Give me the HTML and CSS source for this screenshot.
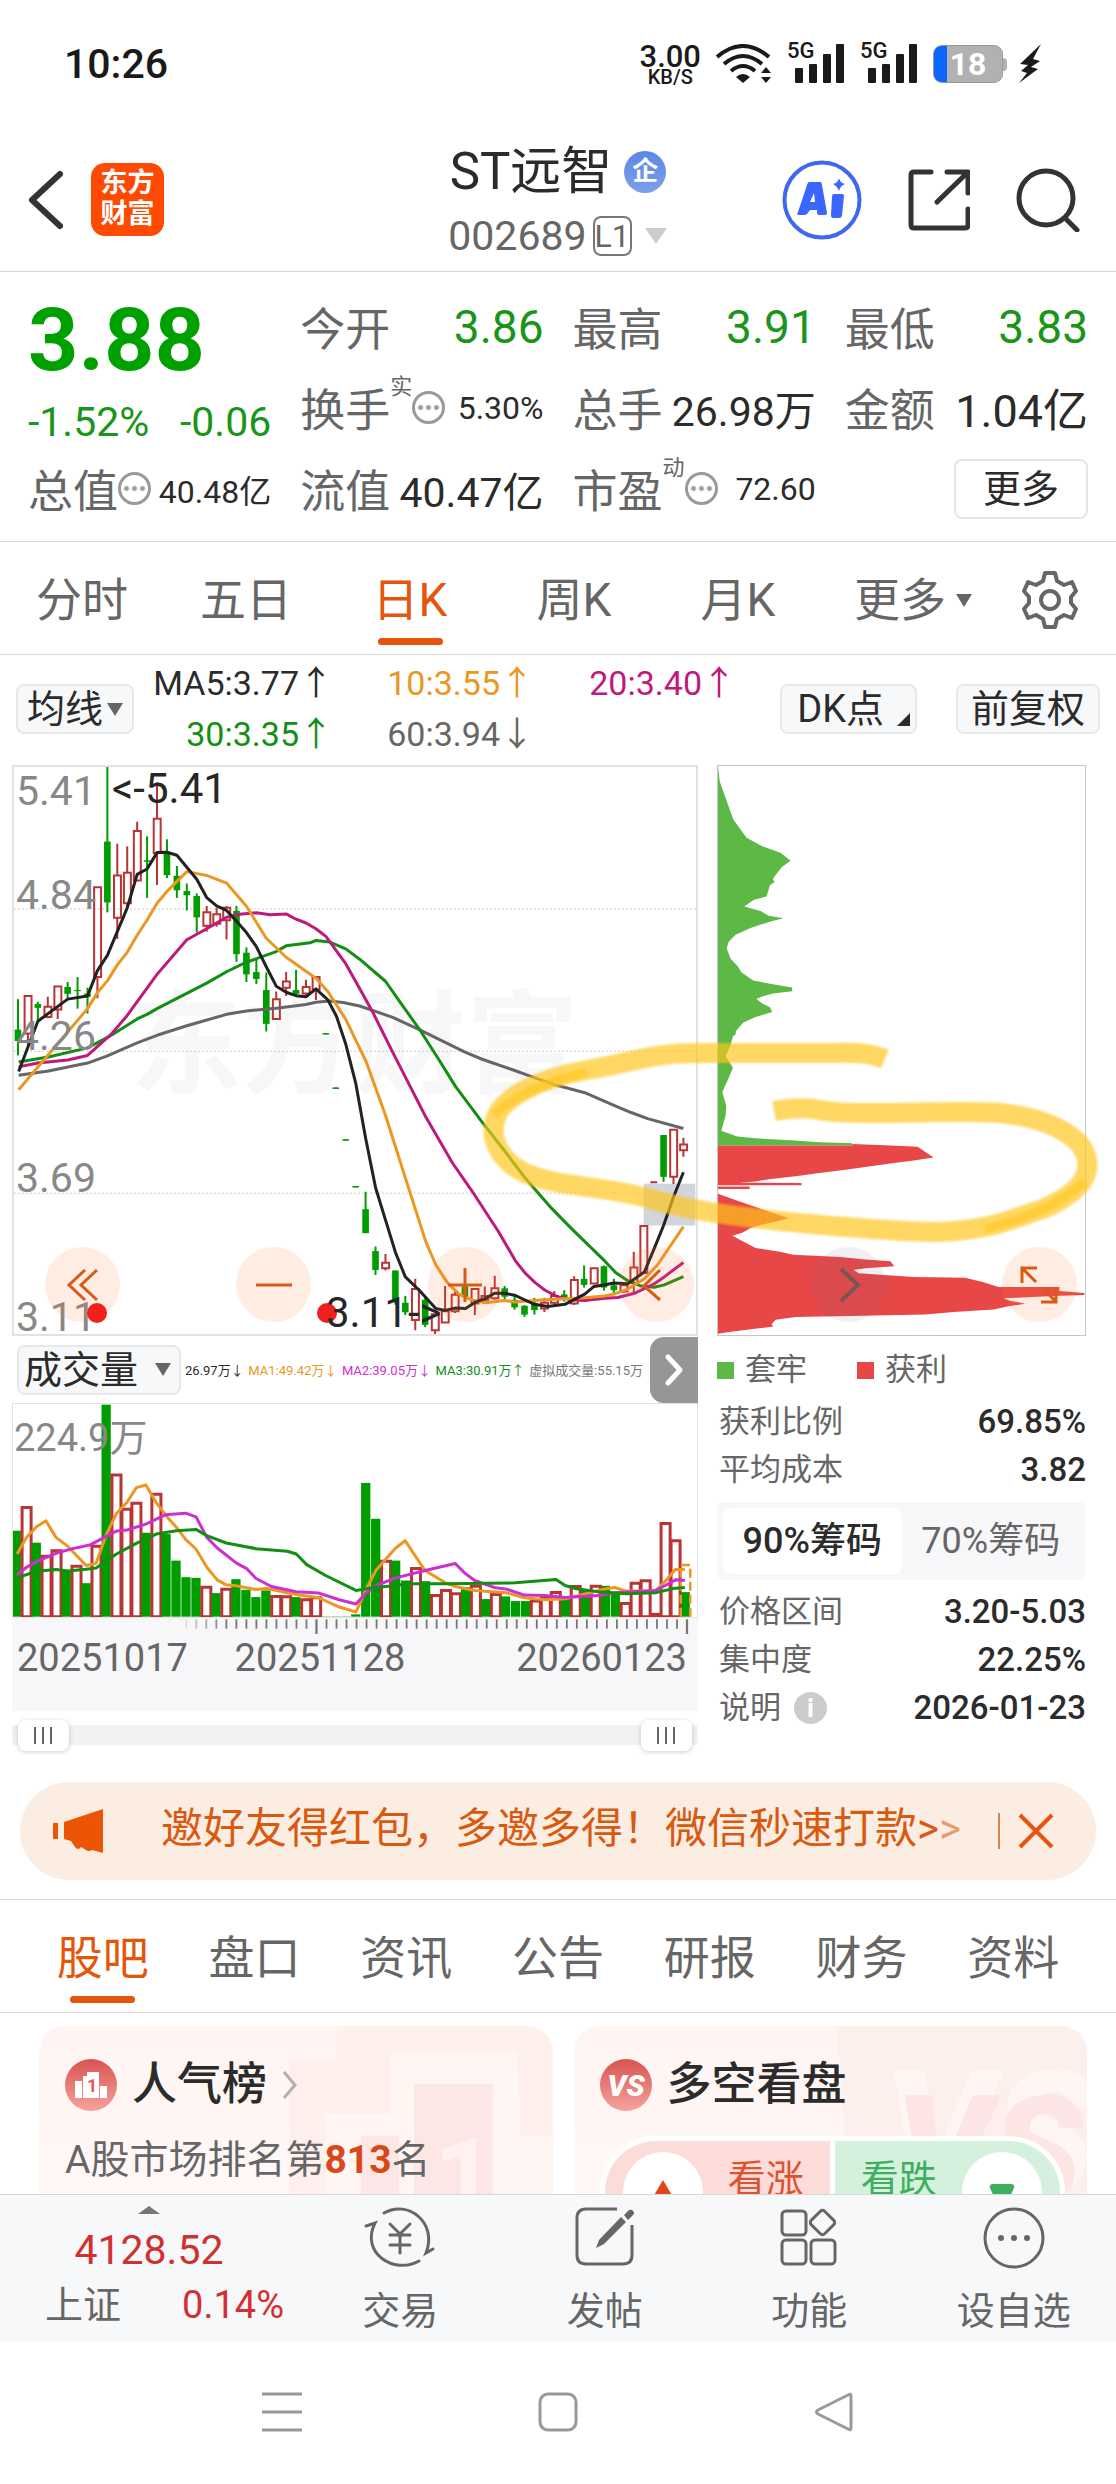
FILE: index.html
```html
<!DOCTYPE html>
<html lang="zh-CN">
<head>
<meta charset="utf-8">
<meta name="viewport" content="width=device-width, initial-scale=1">
<title>ST远智 002689</title>
<link rel="stylesheet" href="styles.css">
</head>
<body>
<div class="status">
  <span class="status-time">10:26</span>
  <div class="status-right">
    <span class="speed"><b>3.00</b><span>KB/S</span></span>
    <svg width="56" height="40" viewBox="0 0 56 40" fill="none" stroke="#1a1a1a" stroke-width="4"><path d="M1 13Q27-9 53 13M8 20Q27 4 46 20M15 27Q27 17 39 27"/><path d="M27 39l-7-6q7-6 14 0zM50 23l5 6H45zM50 39l5-6H45z" fill="#1a1a1a" stroke="none"/></svg>
    <span class="signal"><span>5G</span><svg width="50" height="40" viewBox="0 0 50 40" fill="#1a1a1a"><rect y="24" width="8" height="15" rx="1"/><rect x="14" y="20" width="8" height="19" rx="1"/><rect x="28" y="10" width="8" height="29" rx="1"/><rect x="41" width="8" height="39" rx="1"/></svg></span>
    <span class="signal"><span>5G</span><svg width="50" height="40" viewBox="0 0 50 40" fill="#1a1a1a"><rect y="24" width="8" height="15" rx="1"/><rect x="14" y="20" width="8" height="19" rx="1"/><rect x="28" y="10" width="8" height="29" rx="1"/><rect x="41" width="8" height="39" rx="1"/></svg></span>
    <span class="battery">18</span>
    <svg width="22" height="40" viewBox="0 0 22 40" fill="#1a1a1a"><path d="M22 0L1 20l8 1-7 6 6 2L0 39l19-14-7-2 9-6-7-2z"/></svg>
  </div>
</div>

<header class="header">
  <div class="header-left">
    <button class="plain" aria-label="返回"><svg width="36" height="60" viewBox="0 0 36 60" fill="none" stroke="#333" stroke-width="6" stroke-linecap="round" stroke-linejoin="round"><path d="M32 4L4 30l28 26"/></svg></button>
    <a class="logo" href="#">东方<br>财富</a>
  </div>
  <div class="title">
    <h1>ST远智<span class="badge">企</span></h1>
    <div class="code">002689<span class="level">L1</span><svg width="24" height="16" viewBox="0 0 24 16"><path d="M1 0h22L12 16z" fill="#ccc"/></svg></div>
  </div>
  <div class="header-right">
    <button class="plain" aria-label="AI"><svg width="80" height="80" viewBox="0 0 80 80"><circle cx="40" cy="40" r="37.500" fill="none" stroke="#4068ec" stroke-width="4"/><path fill="#3b66ff" fill-rule="evenodd" d="M27 22h11q2 0 2 3l5 28q0 2-2 2h-6q-2 0-2-2v-3h-7l-3 4q-1 1-3 1h-5q-3 0-1-3l9-27q1-3 2-3zM32 33l-4 9h5zM52 34h8q2 0 2 2l-2 19q0 3-3 3h-6q-2 0-2-3l1-18q0-3 2-3zM57 18q1 5 6 6-5 2-6 7-2-5-6-7 5-1 6-6z"/></svg></button>
    <button class="plain" aria-label="分享"><svg width="62" height="62" viewBox="0 0 62 62" fill="none" stroke="#333" stroke-width="5" stroke-linecap="round" stroke-linejoin="round"><path d="M23 3H6Q3 3 3 6v50q0 3 3 3h51q3 0 3-3V40M39 3h21v21M59 4L29 33"/></svg></button>
    <button class="plain" aria-label="搜索"><svg width="64" height="64" viewBox="0 0 64 64" fill="none" stroke="#333" stroke-width="5" stroke-linecap="round"><circle cx="30" cy="30" r="27"/><path d="M50 51l11 11"/></svg></button>
  </div>
</header>

<main class="content">
<section class="quote">
  <div class="price-block">
    <strong class="price">3.88</strong>
    <div class="change"><span>-1.52%</span><span>-0.06</span></div>
  </div>
  <div class="cell"><span class="label">今开</span><span class="num down">3.86</span></div>
  <div class="cell"><span class="label">最高</span><span class="num down">3.91</span></div>
  <div class="cell"><span class="label">最低</span><span class="num down">3.83</span></div>
  <div class="cell"><span class="label">换手<sup>实</sup><i class="dots"></i></span><span class="num small">5.30%</span></div>
  <div class="cell"><span class="label">总手</span><span class="num mid">26.98万</span></div>
  <div class="cell"><span class="label">金额</span><span class="num large">1.04亿</span></div>
  <div class="cell"><span class="label">总值<i class="dots"></i></span><span class="num small">40.48亿</span></div>
  <div class="cell"><span class="label">流值</span><span class="num mid">40.47亿</span></div>
  <div class="cell"><span class="label">市盈<sup>动</sup><i class="dots"></i></span><span class="num small">72.60</span></div>
  <div class="cell end"><button class="more">更多</button></div>
</section>

<nav class="tabs periods">
  <a href="#">分时</a><a href="#">五日</a><a href="#" class="on">日K</a><a href="#">周K</a><a href="#">月K</a><a href="#" class="more-tab">更多<i class="tri"></i></a>
  <button class="plain gear" aria-label="设置"><svg width="56" height="60" viewBox="0 0 56 60" fill="none" stroke="#666" stroke-width="4" stroke-linejoin="round"><path d="M23 3h10l2 8 7 4 8-3 4 9-5 6v6l5 6-4 9-8-3-7 4-2 8H23l-2-8-7-4-8 3-4-9 5-6v-6l-5-6 4-9 8 3 7-4z"/><circle cx="28" cy="30" r="9"/></svg></button>
</nav>

<section class="indicators">
  <button class="chip">均线<i class="tri"></i></button>
  <div class="ma">
    <span class="c-ma5">MA5:3.77↑</span><span class="c-ma10">10:3.55↑</span><span class="c-ma20">20:3.40↑</span>
    <span class="c-ma30">30:3.35↑</span><span class="c-ma60">60:3.94↓</span>
  </div>
  <button class="chip dk">DK点<i class="corner"></i></button>
  <button class="chip adjust">前复权</button>
</section>

<section class="charts">
  <div class="chart-row">
    <div class="price-chart">
      <span class="watermark">东方财富</span>
      <svg class="plot" id="price" viewBox="36 10 2060 1490" preserveAspectRatio="none"></svg>
      <span class="axis-label y1">5.41</span>
      <span class="axis-label y2">4.84</span>
      <span class="axis-label y3">4.26</span>
      <span class="axis-label y4">3.69</span>
      <span class="axis-label y5">3.11</span>
      <span class="extreme high">&lt;-5.41</span>
    </div>
    <div class="chip-chart">
      <svg class="plot" viewBox="52 10 1103 1490" preserveAspectRatio="none">
        <path fill="#5cb946" d="M52 10L57 50 98 150 138 198 185 220 240 237 270 258 243 275 217 305 222 314 208 322 198 352 160 360 131 378 180 390 205 402 249 409 218 415 150 434 105 452 84 470 78 488 90 515 112 535 122 550 138 560 158 572 208 580 275 590V600L217 606 187 613 168 620 185 632 208 642 215 654 165 667 128 682 105 705 106 712 97 718 90 740 75 770 97 800 80 835 72 850 65 865 77 900 75 925 62 965 110 980 165 985 270 990 358 995 456 998V1004H52z"/>
        <path fill="#e84747" d="M52 1004H456V1000L553 1003 652 1007 700 1035 640 1043 575 1050 435 1067 345 1077 297 1083 205 1092 165 1098 115 1101 303 1102V1108H52zM52 1111H147V1118H52zM52 1130L115 1150 165 1165 215 1180 265 1194 215 1205 180 1212 150 1220 125 1232 95 1240 165 1272 238 1282 278 1290 420 1296 495 1302 570 1307 582 1320 495 1325 460 1330 475 1338 640 1348 795 1350 850 1362 895 1374H1078V1385L1153 1390V1395L1080 1397 910 1404 930 1410 975 1418 925 1425 880 1433 760 1440 675 1446 450 1450 285 1453 225 1460 213 1472 218 1478 168 1483 80 1493 52 1497z"/>
      </svg>
    </div>
    <div class="chart-tools">
      <button class="round" aria-label="左移"><svg width="34" height="34" viewBox="0 0 34 34"><path d="M19 2L3 17l16 15M31 2L15 17l16 15"/></svg></button>
      <button class="round" aria-label="缩小"><svg width="38" height="34" viewBox="0 0 38 34"><path d="M1 17h36"/></svg></button>
      <button class="round" aria-label="放大"><svg width="36" height="34" viewBox="0 0 36 34"><path d="M1 17h34M18 0v34"/></svg></button>
      <button class="round" aria-label="收起"><svg width="34" height="34" viewBox="0 0 34 34"><path d="M20 2L4 18l16 14"/></svg></button>
      <button class="round gray" aria-label="展开"><svg width="34" height="34" viewBox="0 0 34 34"><path d="M10 1l17 16L10 33"/></svg></button>
      <button class="round" aria-label="全屏"><svg width="38" height="38" viewBox="0 0 38 38"><path d="M17 2H2v15M2 2l14 14M21 36h15V22M36 36L23 22"/></svg></button>
    </div>
    <i class="dot dot-a"></i><i class="dot dot-b"></i>
    <span class="extreme low">3.11-&gt;</span>
    <svg class="marker" viewBox="12 764 1074 571" preserveAspectRatio="none" fill="none" stroke="#ffc61e" stroke-width="20">
      <defs><filter id="soft" x="-5%" y="-15%" width="110%" height="130%"><feGaussianBlur stdDeviation="1"/></filter></defs>
      <g filter="url(#soft)" opacity=".68">
        <path d="M885 1058C865 1050 850 1052 820 1052H700C650 1052 640 1060 587 1069S507 1098 499 1110C485 1135 500 1160 525 1172C560 1187 600 1184 647 1197S720 1213 753 1217S890 1231 940 1231C1000 1228 1015 1216 1043 1208C1075 1194 1090 1178 1087 1160C1084 1132 1040 1116 1000 1112S850 1116 820 1109Q800 1105 774 1110"/>
      </g>
      <g filter="url(#soft)" opacity=".6" stroke-width="9"><path d="M494 1114C510 1098 540 1082 587 1071M985 1228C1025 1218 1060 1204 1085 1180"/></g>
    </svg>
  </div>

  <div class="chart-row lower">
    <div class="left">
      <div class="vol-bar">
        <button class="chip vol-name">成交量<i class="tri"></i></button>
        <div class="vol-legend"><span>26.97万↓</span><span class="c-ma10">MA1:49.42万↓</span><span class="c-vm2">MA2:39.05万↓</span><span class="c-ma30">MA3:30.91万↑</span><span class="c-gray">虚拟成交量:55.15万</span></div>
        <button class="next" aria-label="下一个"><svg width="20" height="32" viewBox="0 0 20 32" fill="none" stroke="#fff" stroke-width="5" stroke-linecap="round" stroke-linejoin="round"><path d="M4 3l12 13L4 29"/></svg></button>
      </div>
      <div class="vol-chart">
        <svg class="plot" id="volume" viewBox="28 188 1514 642" preserveAspectRatio="none"></svg>
        <span class="vol-max">224.9万</span>
      </div>
      <div class="axis">
        <svg id="ticks" viewBox="28 0 1514 48" preserveAspectRatio="none"></svg>
        <div class="dates"><span>20251017</span><span>20251128</span><span>20260123</span></div>
      </div>
      <div class="range">
        <input type="range" aria-label="起始日期" value="0"><input type="range" aria-label="结束日期" value="100">
      </div>
    </div>
    <div class="stats">
      <div class="legend"><span class="k green">套牢</span><span class="k red">获利</span></div>
      <dl><div><dt>获利比例</dt><dd>69.85%</dd></div><div><dt>平均成本</dt><dd>3.82</dd></div></dl>
      <div class="seg"><button class="on">90%筹码</button><button>70%筹码</button></div>
      <dl><div><dt>价格区间</dt><dd>3.20-5.03</dd></div><div><dt>集中度</dt><dd>22.25%</dd></div><div><dt>说明<i class="info">i</i></dt><dd>2026-01-23</dd></div></dl>
    </div>
  </div>
</section>

<div class="banner">
  <svg width="52" height="44" viewBox="0 0 52 44" fill="#eb5505"><path d="M0 14h5v16H0zM11 13L50 0v44l-11-3q-3 2-6 0l-5-3q-3 4-6 0l-4-6-7-2z"/></svg>
  <a href="#">邀好友得红包，多邀多得！微信秒速打款&gt;<span>&gt;</span></a>
  <button class="plain close" aria-label="关闭"><svg width="36" height="36" viewBox="0 0 36 36" fill="none" stroke="#e5550f" stroke-width="4"><path d="M2 2l32 32M34 2L2 34"/></svg></button>
</div>

<nav class="tabs sections">
  <a href="#" class="on">股吧</a><a href="#">盘口</a><a href="#">资讯</a><a href="#">公告</a><a href="#">研报</a><a href="#">财务</a><a href="#">资料</a>
</nav>

<section class="cards">
  <article class="card">
    <svg class="card-art" width="514" height="170" viewBox="0 0 514 170"><path fill="#fff0ed" d="M250 35h48V0h216v170H250z"/><path fill="#fff6f4" d="M286 88h66V26h126l4 84h32v60H286z"/><path fill="#fde7e4" d="M375 58h79v112h-79zM322 110h38v60h-38z"/><text x="394" y="190" font-size="110" font-weight="700" fill="#fff1ee">1</text></svg>
    <h2><svg width="52" height="52" viewBox="0 0 52 52"><defs><linearGradient id="rg" x2="0" y2="1"><stop stop-color="#d85450"/><stop offset="1" stop-color="#f5a29d"/></linearGradient></defs><circle cx="26" cy="26" r="26" fill="url(#rg)"/><path fill="#fff" d="M10 22h7v17h-7zM35 27h7v12h-7zM18 39h16V13H22v4h-4z"/><text x="22" y="33" font-size="18" font-weight="700" fill="#d8605c">1</text></svg>人气榜<svg width="16" height="30" viewBox="0 0 16 30" fill="none" stroke="#b5b0b0" stroke-width="3"><path d="M2 2l11 13L2 28"/></svg></h2>
    <p>A股市场排名第<b>813</b>名</p>
  </article>
  <article class="card">
    <svg class="card-art" width="514" height="170" viewBox="0 0 514 170"><path fill="#fdefec" d="M264 0h250v170H276z"/><text x="310" y="166" font-size="170" font-weight="900" font-style="italic" fill="#fff6f3">VS</text><text x="322" y="176" font-size="150" font-weight="900" font-style="italic" fill="#fce5e2">VS</text></svg>
    <h2><svg width="52" height="52" viewBox="0 0 52 52"><circle cx="26" cy="26" r="26" fill="url(#rg)"/><text x="26" y="37" font-size="30" font-weight="900" font-style="italic" text-anchor="middle" fill="#fff">VS</text></svg>多空看盘</h2>
    <div class="vote">
      <button class="bull"><svg width="80" height="80" viewBox="0 0 80 80"><circle cx="40" cy="40" r="40" fill="#fff"/><path d="M40 28l20 34H20z" fill="#e0461a"/></svg>看涨</button>
      <button class="bear">看跌<svg width="80" height="80" viewBox="0 0 80 80"><circle cx="40" cy="40" r="40" fill="#fff"/><path d="M31 32h18q4 0 3 4L40 62 28 36q-1-4 3-4z" fill="#3db060"/></svg></button>
    </div>
  </article>
</section>
</main>

<footer class="bottom-bar">
  <a class="index" href="#"><i class="up-tri"></i><span class="index-value">4128.52</span><span class="index-row"><span>上证</span><span class="up">0.14%</span></span></a>
  <a href="#"><svg width="72" height="66" viewBox="0 0 72 66" fill="none" stroke="#666" stroke-width="3" stroke-linecap="round"><path d="M20 8C44-6 74 18 62 48l7-4M55 56C30 70-4 48 11 18l-9 3M26 19l10 10 10-10M36 29v19M26 30h20M26 40h20"/></svg>交易</a>
  <a href="#"><svg width="60" height="66" viewBox="0 0 60 66"><path d="M42 4H11Q2 4 2 13v37q0 9 9 9h37q9 0 9-9V20" fill="none" stroke="#666" stroke-width="3"/><path d="M49 10l5-5q3-1 4 1 2 2 0 4l-5 5zM46 12l5 5-22 22-8 4 3-8z" fill="#666"/></svg>发帖</a>
  <a href="#"><svg width="60" height="66" viewBox="0 0 60 66" fill="none" stroke="#666" stroke-width="3"><rect x="3" y="6" width="24" height="24" rx="4"/><rect x="3" y="35" width="24" height="24" rx="4"/><rect x="32" y="35" width="24" height="24" rx="4"/><rect x="34" y="8" width="19" height="19" rx="3" transform="rotate(45 43.500 17.500)"/></svg>功能</a>
  <a href="#"><svg width="66" height="66" viewBox="0 0 66 66"><circle cx="33" cy="33" r="29" fill="none" stroke="#666" stroke-width="3"/><g fill="#666"><circle cx="20" cy="33" r="3"/><circle cx="33" cy="33" r="3"/><circle cx="46" cy="33" r="3"/></g></svg>设自选</a>
</footer>
<div class="sys-nav">
  <button class="plain" aria-label="最近任务"><svg width="40" height="40" viewBox="0 0 40 40" stroke="#999" stroke-width="3"><path d="M0 2h40M0 20h40M0 38h40"/></svg></button>
  <button class="plain" aria-label="主屏幕"><svg width="40" height="40" viewBox="0 0 40 40" fill="none" stroke="#999" stroke-width="3"><rect x="2" y="2" width="36" height="36" rx="8"/></svg></button>
  <button class="plain" aria-label="返回上级"><svg width="40" height="40" viewBox="0 0 40 40" fill="none" stroke="#999" stroke-width="3" stroke-linejoin="round"><path d="M37 4v32q0 3-3 1L4 22q-3-2 0-4L34 3q3-2 3 1z"/></svg></button>
</div>
<script src="chart.js"></script>
</body>
</html>
```
FILE: styles.css
```css
* { box-sizing: border-box; margin: 0; padding: 0; }
body {
  height: 100vh; display: flex; flex-direction: column; background: #fff; color: #2b2b2b;
  font-family: Roboto, "Noto Sans CJK SC", sans-serif;
}
button, input { font: inherit; color: inherit; border: 0; background: none; cursor: pointer; }
a { color: inherit; text-decoration: none; }
i { font-style: normal; }
svg { display: block; flex: none; }
.plain { display: flex; }

.status { display: flex; justify-content: space-between; align-items: center; padding: 40px 75px 40px 64px; color: #1a1a1a; }
.status-time { font-size: 41px; line-height: 48px; font-weight: 500; }
.status-right { display: flex; align-items: center; gap: 15px; }
.speed { display: flex; flex-direction: column; align-items: center; font-size: 20px; line-height: 16px; font-weight: 500; }
.speed b { font-size: 31px; line-height: 25px; font-weight: 500; }
.signal { display: flex; position: relative; padding-left: 8px; }
.signal > span { position: absolute; left: 0; top: -5px; font-size: 22px; line-height: 24px; font-weight: 500; }
.battery {
  width: 70px; height: 38px; margin-right: 1px; border-radius: 9px; border: 1px solid #999; position: relative;
  background: linear-gradient(90deg, #0a66ff 13px, #b1b1b1 13px); color: #fff;
  font-size: 32px; line-height: 36px; font-weight: 700; text-align: center;
}
.battery::after { content: ""; position: absolute; left: 69px; top: 12px; width: 4px; height: 13px; background: #b1b1b1; border-radius: 0 4px 4px 0; }

.header { display: grid; grid-template-columns: 1fr auto 1fr; align-items: center; border-bottom: 1px solid #d8d8d8; }
.header-left { display: flex; align-items: center; gap: 27px; padding-left: 28px; }
.logo { width: 73px; height: 73px; border-radius: 14px; background: #ff4a03; color: #fff; font-size: 27px; line-height: 31px; font-weight: 700; text-align: center; padding-top: 5px; }
.title { margin: 12px 0 3px; display: flex; flex-direction: column; align-items: center; }
.title h1 { display: flex; align-items: center; gap: 12px; font-size: 51px; line-height: 64px; font-weight: 400; }
.badge { width: 42px; height: 42px; border-radius: 50%; background: linear-gradient(#5a86e8, #7ba0ea); color: #fff; font-size: 26px; line-height: 41px; font-weight: 700; text-align: center; }
.code { display: flex; align-items: center; font-size: 41px; line-height: 64px; color: #666; }
.level { border: 2px solid #777; border-radius: 8px; font-size: 32px; line-height: 36px; margin: 0 12px 0 6px; }
.header-right { display: flex; justify-content: flex-end; align-items: center; gap: 46px; padding-right: 36px; }

.content { flex: 1; min-height: 0; overflow: hidden; }
.quote { display: grid; grid-template-columns: repeat(4, 1fr); grid-auto-rows: 81px; column-gap: 29px; padding: 14px 28px 12px; border-bottom: 1px solid #d8d8d8; }
.price-block { grid-row: span 2; color: #00a000; }
.price { display: block; font-size: 88px; line-height: 108px; font-weight: 700; }
.change { display: flex; justify-content: space-between; font-size: 41px; line-height: 56px; color: #1a951a; white-space: nowrap; }
.cell { display: flex; justify-content: space-between; align-items: center; white-space: nowrap; }
.cell.end { justify-content: flex-end; }
.label { display: flex; align-items: center; font-size: 45px; color: #666; }
.label sup { font-size: 22px; line-height: 24px; align-self: flex-start; }
.dots { width: 33px; height: 33px; border: 3px solid #999; border-radius: 50%; background: radial-gradient(circle, #999 2px, transparent 3px) 50% 50% / 8px 8px; background-clip: content-box; padding: 9px 2px; }
.num { font-size: 46px; color: #2b2b2b; }
.num.large { font-size: 45px; }
.num.mid { font-size: 41px; }
.num.small { font-size: 32px; }
.num.down { color: #1a951a; }
.more { border: 2px solid #e6e6e6; border-radius: 8px; padding: 0 27px; font-size: 38px; line-height: 56px; }

.tabs { display: flex; align-items: flex-start; border-bottom: 1px solid #d8d8d8; color: #666; font-size: 46px; line-height: 60px; padding: 28px 0 9px; white-space: nowrap; }
.tabs a { flex: 1; display: flex; flex-direction: column; align-items: center; gap: 8px; }
.tabs a::after { content: ""; width: 65px; height: 7px; border-radius: 4px; }
.tabs .on { color: #e5550a; }
.tabs .on::after { background: #e5550a; }
.periods { padding-right: 38px; }
.periods .more-tab { flex: none; flex-direction: row; align-items: center; width: 170px; padding-left: 34px; gap: 10px; }
.periods .more-tab::after { display: none; }
.gear { margin-left: 32px; }
.sections { padding-left: 27px; padding-right: 27px; }
.tri { border: 8px solid transparent; border-top: 13px solid #666; border-bottom: 0; }

.indicators { display: flex; align-items: center; padding: 3px 16px 5px; }
.chip { display: flex; align-items: center; background: #f7f8fa; border: 2px solid #e6e8ea; border-radius: 8px; font-size: 38px; line-height: 46px; padding: 0 9px; white-space: nowrap; gap: 4px; }
.chip + .chip { margin-left: 39px; }
.ma { flex: 1; display: grid; grid-template-columns: 199px 201px 202px; justify-items: end; font-size: 34px; line-height: 51px; white-space: nowrap; }
.dk { padding: 0 5px 0 15px; gap: 13px; }
.adjust { padding: 0 13px; }
.corner { border-left: 13px solid transparent; border-bottom: 13px solid #2b2b2b; align-self: flex-end; margin-bottom: 6px; }
.c-ma10 { color: #eb9722; }
.c-ma20 { color: #bd1a7c; }
.c-ma30 { color: #128f12; }
.c-ma60 { color: #666; }
.c-vm2 { color: #cf2fd0; }
.c-gray { color: #777; }

.chart-row { display: grid; grid-template-columns: 686fr 369fr; gap: 19px; padding: 0 30px 0 12px; position: relative; }
.price-chart { aspect-ratio: 686 / 571; border: 2px solid #e2e2e2; position: relative; }
.chip-chart { border: 1px solid #c4c4c4; min-height: 0; position: relative; }
.plot { width: 100%; height: 100%; position: absolute; inset: 0; }
.plot * { vector-effect: non-scaling-stroke; }
.watermark { position: absolute; left: 17%; top: 37%; font-size: 112px; line-height: 140px; font-weight: 700; color: #f7f7f7; white-space: nowrap; }
.axis-label { position: absolute; left: 2px; font-size: 41px; line-height: 40px; color: #888; }
.y1 { top: 4px; }
.y2 { top: 19%; }
.y3 { top: 44%; }
.y4 { top: 69%; }
.y5 { bottom: -3px; }
.extreme { position: absolute; font-size: 42px; line-height: 40px; color: #262626; }
.high { left: 98px; top: 2px; }
.low { left: 326px; bottom: 3px; }
.chart-tools { position: absolute; left: 45px; right: 39px; bottom: 14px; display: flex; justify-content: space-between; }
.round { width: 75px; height: 75px; border-radius: 50%; background: rgba(255, 120, 60, .14); display: flex; align-items: center; justify-content: center; }
.round svg { fill: none; stroke: #d95a17; stroke-width: 3; }
.round.gray { background: rgba(110, 110, 130, .1); }
.round.gray svg { stroke: #7a5555; stroke-width: 4; }
.dot { position: absolute; bottom: 13px; width: 20px; height: 20px; border-radius: 50%; background: #f0201c; }
.dot-a { left: 87px; }
.dot-b { left: 317px; }
.marker { position: absolute; left: 12px; top: 0; width: calc(100% - 42px); height: 100%; overflow: visible; pointer-events: none; }

.left { min-width: 0; }
.vol-bar { display: flex; align-items: center; height: 67px; }
.vol-name { margin-left: 5px; padding: 0 8px 0 5px; gap: 17px; }
.vol-legend { flex: 1; min-width: 0; display: flex; justify-content: space-between; padding: 0 7px 0 4px; font-size: 13px; white-space: nowrap; }
.next { flex: none; width: 48px; height: 66px; border-radius: 14px 0 0 14px; background: #969696; display: flex; align-items: center; justify-content: center; }
.vol-chart { height: 215px; position: relative; border: 1px solid #e2e2e2; }
.vol-max { position: absolute; left: 1px; top: 13px; font-size: 38px; line-height: 42px; color: #888; }
.axis { background: #f7f7f9; padding-bottom: 28px; }
.axis svg { width: 100%; height: 16px; }
.dates { display: flex; justify-content: space-between; padding: 0 11px 0 5px; font-size: 38px; line-height: 49px; color: #666; }
.dates span:nth-child(2) { margin-right: 64px; }
.range { display: grid; margin-top: 8px; height: 32px; padding: 0 6px; background: linear-gradient(#f2f2f4, #f2f2f4) 0 50% / 100% 20px no-repeat; border-radius: 10px; }
.range input { grid-area: 1 / 1; width: 100%; height: 32px; appearance: none; pointer-events: none; }
.range input::-webkit-slider-thumb {
  appearance: none; pointer-events: auto; width: 51px; height: 31px; border-radius: 8px; box-shadow: 0 1px 5px rgba(0, 0, 0, .2);
  background: repeating-linear-gradient(90deg, #666 0 2px, transparent 2px 8px) 16px 7px / 18px 17px no-repeat, #fff;
}

.stats { font-size: 31px; color: #666; white-space: nowrap; padding-top: 10px; }
.legend { display: flex; gap: 50px; line-height: 48px; margin-bottom: 4px; }
.k { display: flex; align-items: center; gap: 11px; }
.k::before { content: ""; width: 17px; height: 17px; background: #5cb946; }
.k.red::before { background: #e84747; }
.stats dl div { display: flex; justify-content: space-between; line-height: 48px; padding-left: 2px; }
.stats dt { display: flex; align-items: center; gap: 13px; }
.stats dd { color: #2b2b2b; font-weight: 500; font-size: 33px; }
.seg { display: flex; margin: 8px 0; padding: 6px; border-radius: 7px; background: #f7f7fa; }
.seg button { flex: 1; font-size: 36px; line-height: 66px; border-radius: 7px; }
.seg .on { background: #fff; font-weight: 500; color: #2b2b2b; }
.info { width: 33px; height: 32px; border-radius: 50%; background: #ccc; color: #fff; font-size: 26px; line-height: 33px; font-weight: 700; text-align: center; }

.banner { display: flex; align-items: center; margin: 31px 20px 19px; padding: 0 42px 0 33px; height: 98px; border-radius: 49px; background: #fcede3; color: #d9590f; font-size: 42px; white-space: nowrap; }
.banner a { flex: 1; margin-left: 56px; line-height: 60px; padding-bottom: 4px; }
.banner a span { opacity: .55; }
.close { border-left: 2px solid #d9814f; padding-left: 18px; }
.banner + .tabs { border-top: 1px solid #d8d8d8; }

.cards { display: grid; grid-template-columns: 1fr 1fr; gap: 21px; padding: 13px 29px 0 39px; }
.card { border-radius: 26px; background: linear-gradient(#fff4f2, #fffaf8); padding: 32px 26px 0; min-height: 240px; position: relative; overflow: hidden; }
.card > * { position: relative; }
.card .card-art { position: absolute; right: 0; top: 0; }
.card h2 { display: flex; align-items: center; gap: 15px; font-size: 45px; line-height: 54px; font-weight: 500; }
.card p { font-size: 39px; line-height: 50px; color: #666; margin-top: 23px; }
.card b { color: #d9481a; }
.vote { display: flex; gap: 5px; margin: 24px -4px 0 0; border: 5px solid #fff; border-radius: 60px; overflow: hidden; font-size: 38px; background: #fff; }
.vote button { flex: 1; display: flex; align-items: flex-start; justify-content: space-between; line-height: 54px; padding: 11px 26px 11px 18px; }
.bull { background: #fcdcd9; color: #dc5330; }
.vote .bear { background: #d5f0dc; color: #3db060; padding: 11px 18px 11px 26px; }

.bottom-bar { display: flex; background: #f7f8fa; border-top: 1px solid #d8d8d8; color: #666; font-size: 38px; line-height: 48px; white-space: nowrap; }
.bottom-bar a { flex: 1; display: flex; flex-direction: column; align-items: center; gap: 16px; padding: 10px 0 6px; }
.bottom-bar .index { flex: 0 0 298px; gap: 0; padding-top: 11px; }
.up-tri { border: 11px solid transparent; border-bottom: 8px solid #777; border-top: 0; }
.index-value { font-size: 41px; line-height: 56px; margin-top: 8px; color: #d32f30; }
.index-row { display: flex; align-self: stretch; justify-content: space-between; padding: 0 14px 0 45px; line-height: 54px; }
.up { color: #d32f30; }
.sys-nav { display: flex; justify-content: center; gap: 236px; padding: 51px 0 52px; }
```
FILE: chart.js
```js
const NS = 'http://www.w3.org/2000/svg';
const GREEN = '#009d00';
const RED = '#b93434';

function add(parent, name, attrs) {
  const node = document.createElementNS(NS, name);
  for (const key in attrs) node.setAttribute(key, attrs[key]);
  parent.appendChild(node);
}

function line(parent, points, colour) {
  add(parent, 'polyline', { points, fill: 'none', stroke: colour, 'stroke-width': 3, 'stroke-linejoin': 'round' });
}

/* One entry per trading day: direction, high, body top, body bottom, low. */
const days = [
  'g 620 700 730 768', 'r 612 612 710 745', 'g 627 633 643 675', 'r 614 640 667 670', 'r 587 587 647 672',
  'g 575 588 606 618', 'g 562 596 599 645', 'g 590 605 614 658', 'r 326 326 562 618', 'g 10 206 366 392',
  'r 212 295 406 462', 'r 218 288 368 380', 'r 154 178 308 310', 'g 192 255 259 354', 'r 50 146 236 320',
  'g 200 235 294 302', 'g 270 296 334 354', 'g 316 336 347 387', 'g 342 349 405 445', 'r 375 392 427 443',
  'r 380 397 422 430', 'r 375 380 413 463', 'g 375 388 502 522', 'g 484 498 555 575', 'g 515 549 567 580',
  'g 550 596 685 705', 'r 600 620 672 672', 'r 549 574 590 612', 'g 543 596 606 610', 'r 569 588 605 610',
  'r 562 562 595 622', 'g 709 709 713 713', 'g 852 852 856 856', 'g 988 988 992 992', 'g 1111 1111 1115 1115',
  'g 1126 1172 1235 1235', 'g 1270 1282 1332 1345', 'r 1290 1313 1327 1333', 'g 1333 1333 1410 1423', 'g 1400 1418 1443 1450',
  'r 1355 1382 1463 1490', 'g 1405 1410 1476 1482', 'r 1448 1448 1490 1502', 'r 1374 1440 1470 1470', 'r 1385 1397 1440 1445',
  'g 1370 1375 1403 1412', 'r 1380 1382 1420 1450', 'r 1375 1400 1410 1415', 'r 1347 1380 1406 1410', 'g 1374 1380 1402 1408',
  'g 1400 1410 1430 1436', 'g 1424 1426 1449 1455', 'g 1405 1418 1437 1449', 'r 1405 1418 1433 1442', 'r 1387 1400 1418 1425',
  'g 1385 1396 1410 1415', 'r 1348 1358 1420 1424', 'g 1320 1355 1371 1378', 'r 1327 1327 1367 1367', 'g 1320 1322 1378 1386',
  'g 1355 1372 1385 1392', 'r 1368 1372 1388 1392', 'r 1284 1325 1365 1390', 'r 1216 1216 1340 1340', 'r 1101 1101 1101 1101',
  'g 977 977 1087 1100', 'r 963 963 1087 1106', 'r 984 1002 1017 1034'
].map(row => row.split(' '));

const price = document.getElementById('price');
[383, 757, 1130].forEach(y => add(price, 'path', { d: `M36 ${y}H2096`, stroke: '#ccc', 'stroke-width': 1, 'stroke-dasharray': '2 2' }));
add(price, 'rect', { x: 1938, y: 1105, width: 156, height: 110, fill: '#d2d5dc' });
days.forEach(([dir, ...v], i) => {
  const [high, top, bottom, low] = v.map(Number);
  const x = 48 + 30 * i;
  if (dir === 'g') {
    add(price, 'path', { d: `M${x} ${high}V${low}`, stroke: GREEN, 'stroke-width': 2 });
    add(price, 'rect', { x: x - 10, y: top, width: 20, height: bottom - top, fill: GREEN });
  } else {
    add(price, 'path', { d: `M${x} ${high}V${top}M${x} ${bottom}V${low}M${x - 10} ${top}h21V${bottom}h-21z`, stroke: RED, 'stroke-width': 2, fill: 'none' });
  }
});
line(price, '50 820 140 809 258 788 318 769 408 735 468 715 558 690 678 660 738 651 828 644 918 634 948 628 990 625 1030 629 1080 638 1130 653 1180 668 1260 700 1400 760 1450 778 1540 805 1610 827 1670 845 1760 866 1850 900 1900 918 1950 934 2058 960', '#666');
line(price, '50 785 140 772 258 748 330 715 408 672 438 660 468 645 618 578 678 548 738 523 828 495 858 480 930 472 948 466 990 470 1038 488 1080 515 1158 573 1200 625 1265 705 1320 780 1370 850 1450 943 1510 1010 1580 1090 1660 1170 1720 1223 1820 1308 1855 1340 1890 1360 1930 1374 1970 1377 2000 1371 2058 1349', '#128f12');
line(price, '50 798 108 788 198 780 258 768 330 712 378 663 468 555 558 464 618 435 678 405 718 397 768 393 810 398 858 396 888 410 918 420 948 435 978 455 1038 527 1080 592 1120 655 1180 760 1280 930 1360 1050 1420 1125 1500 1232 1550 1307 1580 1340 1610 1365 1640 1385 1680 1403 1720 1410 1760 1412 1820 1406 1860 1404 1910 1393 1970 1368 2000 1350 2058 1312', '#bd1a7c');
line(price, '50 858 258 645 288 603 318 572 348 530 378 497 408 452 438 412 468 368 498 337 558 285 618 295 678 315 738 376 798 460 858 510 948 565 984 600 1038 673 1100 785 1158 925 1220 1095 1280 1258 1310 1318 1345 1365 1380 1395 1420 1411 1460 1418 1518 1412 1548 1416 1640 1410 1760 1405 1820 1400 1848 1395 1890 1382 1940 1355 1980 1318 2058 1218', '#eb9722');
line(price, '50 810 108 678 198 620 258 612 288 545 318 505 378 380 408 292 438 278 468 235 498 234 528 242 588 305 618 353 648 375 678 387 708 415 738 445 768 482 798 535 828 586 858 602 888 611 918 614 948 593 984 622 1010 665 1038 738 1068 840 1098 985 1128 1115 1158 1200 1188 1285 1218 1350 1260 1385 1310 1433 1338 1438 1368 1432 1400 1433 1428 1417 1458 1407 1488 1393 1518 1393 1548 1398 1578 1410 1608 1422 1648 1428 1700 1422 1760 1395 1788 1375 1818 1371 1848 1366 1890 1368 1940 1337 1970 1275 1998 1215 2028 1140 2058 1075', '#222');

/* Top edge of each day's volume bar; the base sits at 829. */
const tops = [570, 498, 606, 645, 628, 690, 675, 728, 615, 190, 400, 503, 485, 576, 458, 580, 660, 710, 712, 738, 758, 744,
  716, 748, 770, 750, 766, 767, 770, 776, 770, 828, 828, 828, 822, 426, 534, 660, 660, 720, 682, 722, 763, 748, 758, 740, 735,
  776, 760, 768, 782, 782, 780, 770, 754, 776, 736, 750, 735, 736, 760, 787, 726, 719, 820, 546, 598, 755];
const rise = [1, 3, 4, 6, 8, 10, 11, 12, 14, 19, 21, 26, 27, 29, 30, 37, 40, 42, 43, 44, 46, 48, 52, 53, 54, 56, 58, 61, 62, 63, 64, 65, 66];
const volume = document.getElementById('volume');
tops.forEach((y, i) => {
  const x = 35 + 22.1 * i;
  if (rise.includes(i)) {
    add(volume, 'rect', { x: x - 9, y: y + 2, width: 20, height: 827 - y, fill: '#fff', stroke: RED, 'stroke-width': 3 });
  } else {
    add(volume, 'rect', { x: x - 10, y, width: 20.5, height: 829 - y, fill: GREEN });
  }
});
add(volume, 'path', { d: 'M1506 829V673H1527V829', fill: 'none', stroke: '#eb9722', 'stroke-width': 2.5, 'stroke-dasharray': '9 4' });
line(volume, '37 640 58 590 80 558 101 540 123 590 150 618 190 675 212 668 235 580 257 518 280 485 301 440 322 432 345 485 370 530 390 560 410 596 433 625 457 680 480 718 500 733 522 736 566 747 590 744 655 762 705 772 750 800 787 815 810 745 832 688 875 622 896 600 918 645 940 690 985 727 1007 738 1050 750 1120 757 1160 772 1205 778 1250 775 1290 762 1340 745 1360 741 1385 752 1450 752 1472 722 1494 687 1515 687', '#eb9722');
line(volume, '37 703 58 680 80 663 123 638 160 624 200 612 230 590 257 571 280 568 322 550 365 522 410 517 433 528 457 590 480 622 522 667 545 684 566 714 600 738 655 754 705 758 750 778 787 791 810 757 832 735 875 712 940 690 1007 669 1030 700 1050 720 1096 742 1120 746 1160 764 1205 765 1250 771 1320 765 1360 757 1450 750 1472 735 1494 718 1515 720', '#cf2fd0');
line(volume, '37 712 80 692 123 687 150 691 190 686 212 682 257 640 301 608 345 580 390 570 433 566 457 585 500 607 566 624 635 632 655 640 678 672 720 705 787 750 832 740 875 736 896 730 985 730 1140 727 1230 717 1250 735 1275 745 1330 755 1385 760 1450 757 1494 743 1515 741', '#128f12');

const ticks = document.getElementById('ticks');
for (let i = 17; i < 68; i++) {
  const major = i === 30 || i === 67;
  add(ticks, 'path', {
    d: `M${37 + 22.1 * i} 4V${major ? 48 : 32}`, stroke: '#777', 'stroke-width': major ? 5 : 4,
    opacity: major ? 1 : Math.min(1, (i - 16) * .2)
  });
}
```
